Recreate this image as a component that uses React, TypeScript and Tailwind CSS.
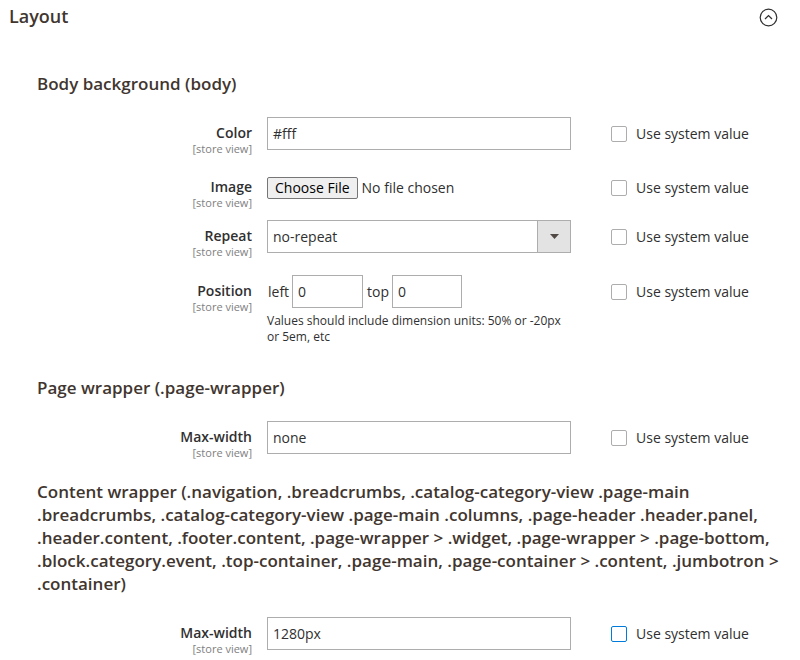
import React from 'react';

const font = { fontFamily: '"Open Sans", "Noto Sans", sans-serif' };

const Label: React.FC<{ text: string }> = ({ text }) => (
  <div className="w-[215px] shrink-0 pt-[7px] text-right">
    <div className="text-[14px] leading-[18px] font-semibold text-[#303030]">{text}</div>
    <div className="text-[11px] leading-[13px] text-[#808080]">[store view]</div>
  </div>
);

const SystemValue: React.FC<{ focused?: boolean }> = ({ focused }) => (
  <label className="ml-[25px] flex h-[33px] items-center gap-[9px] text-[14px] text-[#303030]">
    <span
      className={
        focused
          ? 'h-[16px] w-[16px] rounded-[2px] border border-[#007bdb] bg-white'
          : 'h-[16px] w-[16px] rounded-[2px] border border-[#adadad] bg-white'
      }
    />
    Use system value
  </label>
);

const TextInput: React.FC<{ value: string; width?: string }> = ({ value, width = 'w-[304px]' }) => (
  <div className={`${width} flex h-[33px] items-center border border-[#adadad] bg-white pl-[5px] text-[14px] text-[#303030]`}>
    {value}
  </div>
);

const App: React.FC = () => {
  return (
    <div className="h-[660px] w-[800px] overflow-hidden bg-white" style={font}>
      <div className="flex h-[33px] items-center justify-between pl-[9px] pr-[22px]">
        <h1 className="text-[18px] font-semibold text-[#41362f]">Layout</h1>
        <svg width="19" height="19" viewBox="0 0 19 19" className="mt-[2px]">
          <circle cx="9.5" cy="9.5" r="8.3" fill="none" stroke="#303030" strokeWidth="1.2" />
          <path d="M6 11 L9.5 7.6 L13 11" fill="none" stroke="#303030" strokeWidth="1.3" />
        </svg>
      </div>

      <div className="pl-[37px]">
        <h2 className="mt-[40px] text-[17px] leading-[22px] font-semibold text-[#41362f]">Body background (body)</h2>

        <div className="mt-[22px] flex h-[33px] items-start gap-[15px]">
          <Label text="Color" />
          <TextInput value="#fff" />
          <SystemValue />
        </div>

        <div className="mt-[21px] flex h-[33px] items-start gap-[15px]">
          <Label text="Image" />
          <div className="flex h-[33px] w-[304px] items-center gap-[4px] text-[14px] text-[#303030]">
            <span className="flex h-[22px] items-center rounded-[2px] border border-[#767676] bg-[#efefef] px-[7px] text-black">
              Choose File
            </span>
            <span>No file chosen</span>
          </div>
          <SystemValue />
        </div>

        <div className="mt-[16px] flex h-[33px] items-start gap-[15px]">
          <Label text="Repeat" />
          <div className="flex h-[33px] w-[304px] border border-[#adadad] bg-white text-[14px] text-[#303030]">
            <div className="flex flex-1 items-center pl-[5px]">no-repeat</div>
            <div className="flex w-[33px] items-center justify-center border-l border-[#adadad] bg-[#e3e3e3]">
              <svg width="9" height="5" viewBox="0 0 9 5">
                <path d="M0 0 H9 L4.5 5 Z" fill="#514943" />
              </svg>
            </div>
          </div>
          <SystemValue />
        </div>

        <div className="mt-[22px] flex items-start gap-[15px]">
          <Label text="Position" />
          <div className="w-[304px]">
            <div className="flex h-[33px] items-center text-[14px] text-[#303030]">
              <span className="pl-[1px] pr-[3px]">left</span>
              <TextInput value="0" width="w-[71px]" />
              <span className="pl-[4px] pr-[3px]">top</span>
              <TextInput value="0" width="w-[70px]" />
            </div>
            <p className="mt-[5px] text-[12px] leading-[16px] text-[#303030]">
              Values should include dimension units: 50% or -20px or 5em, etc
            </p>
          </div>
          <SystemValue />
        </div>

        <h2 className="mt-[32px] text-[17px] leading-[22px] font-semibold text-[#41362f]">Page wrapper (.page-wrapper)</h2>

        <div className="mt-[22px] flex h-[33px] items-start gap-[15px]">
          <Label text="Max-width" />
          <TextInput value="none" />
          <SystemValue />
        </div>

        <h2 className="mt-[26px] w-[746px] text-[17px] leading-[23px] font-semibold text-[#41362f]">
          Content wrapper (.navigation, .breadcrumbs, .catalog-category-view .page-main .breadcrumbs,
          .catalog-category-view .page-main .columns, .page-header .header.panel, .header.content,
          .footer.content, .page-wrapper &gt; .widget, .page-wrapper &gt; .page-bottom, .block.category.event,
          .top-container, .page-main, .page-container &gt; .content, .jumbotron &gt; .container)
        </h2>

        <div className="mt-[22px] flex h-[33px] items-start gap-[15px]">
          <Label text="Max-width" />
          <TextInput value="1280px" />
          <SystemValue focused />
        </div>
      </div>
    </div>
  );
};

export default App;
